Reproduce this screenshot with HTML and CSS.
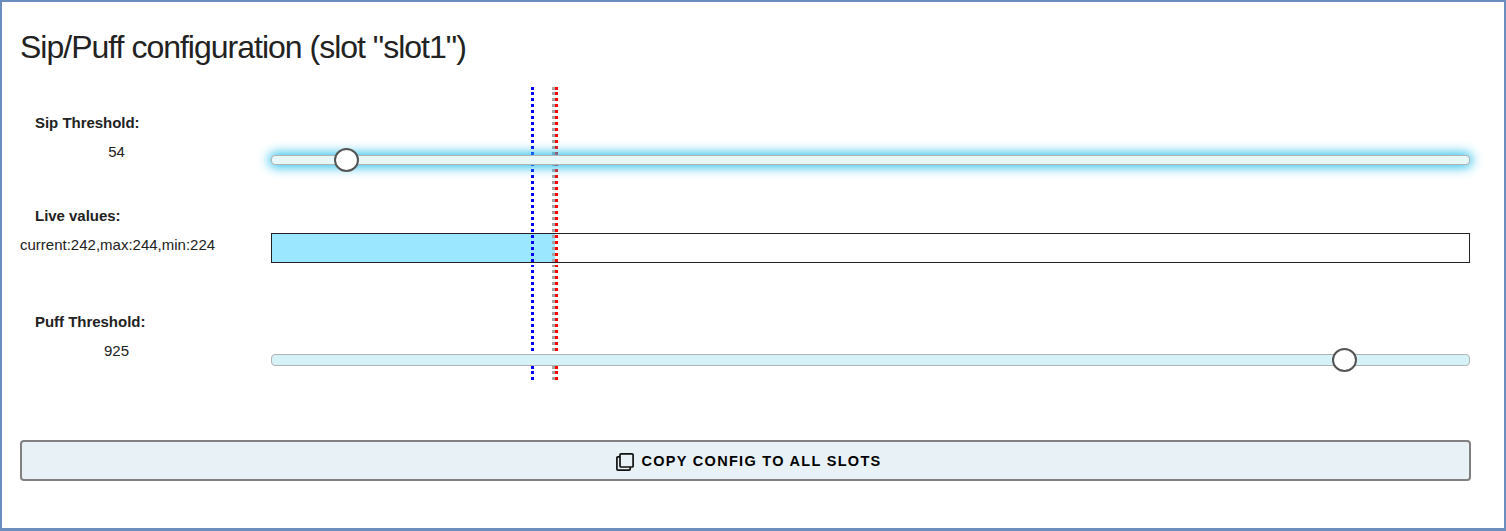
FILE: index.html
```html
<!DOCTYPE html>
<html lang="en">
<head>
<meta charset="utf-8">
<title>Sip/Puff configuration</title>
<link rel="stylesheet" href="styles.css">
</head>
<body>
<main class="panel">
  <h1 class="title">Sip/Puff configuration (slot "slot1")</h1>
  <section class="config">
    <div class="row row-sip">
      <div class="info"><span class="label">Sip Threshold:</span><span class="value">54</span></div>
      <div class="slider focused"><span class="thumb" style="left:62px"></span></div>
    </div>
    <div class="row row-live">
      <div class="info"><span class="label">Live values:</span><span class="value live-value">current:242,max:244,min:224</span></div>
      <div class="bar"><div class="fill" style="width:283px"></div></div>
    </div>
    <div class="row row-puff">
      <div class="info"><span class="label">Puff Threshold:</span><span class="value">925</span></div>
      <div class="slider"><span class="thumb" style="left:1060px"></span></div>
    </div>
    <i class="marker min" style="left:511px"></i>
    <i class="marker current" style="left:532px"></i>
    <i class="marker max" style="left:535px"></i>
  </section>
  <button class="copy" type="button">
    <svg class="icon" viewBox="0 0 18 18" width="18" height="18" fill="none" stroke="#111" stroke-width="1.7"><rect x="4" y=".9" width="13.1" height="13.1" rx="1"/><path d="M4 3.8H1.9Q.9 3.8.9 4.8V16.1Q.9 17.1 1.9 17.1H13.2Q14.2 17.1 14.2 16.1V14"/></svg>
    <span class="copy-text">Copy config to all slots</span>
  </button>
</main>
</body>
</html>
```
FILE: styles.css
```css
* { box-sizing: border-box; }
body { margin: 0; font-family: "Liberation Sans", Arial, sans-serif; color: #222; background: #fff; }
.panel { height: 531px; padding: 28px 34px 0 18px; border: 2px solid #6c8ebf; border-bottom-width: 3px; }
.title { margin: 0; height: 57px; font-size: 32px; font-weight: 400; line-height: 35px; letter-spacing: -1px; white-space: nowrap; }
.config { position: relative; height: 293px; width: 1450px; }
.row { display: grid; grid-template-columns: 193px 1199px; column-gap: 58px; }
.row-sip { height: 93px; padding-top: 26px; }
.row-live { height: 106px; padding-top: 26px; }
.row-puff { height: 94px; padding-top: 26px; }
.info { display: flex; flex-direction: column; font-size: 15px; line-height: 20px; gap: 9px; }
.label { padding-left: 15px; font-size: 15px; font-weight: 700; letter-spacing: -.03px; white-space: nowrap; }
.value { text-align: center; font-size: 15px; white-space: nowrap; }
.live-value { align-self: flex-start; }
.slider { position: relative; z-index: 2; height: 12px; margin-top: 42px; border: 1px solid #b2b2b2; border-radius: 4px; background: #d5f2f8; }
.focused { height: 10px; background: #e8f7fc; box-shadow: 0 0 12px 2px #23bdec; }
.thumb { position: absolute; top: -7px; width: 25px; height: 24px; border: 2px solid #555; border-radius: 50%; background: #fff; }
.focused .thumb { top: -8px; }
.bar { height: 30px; margin-top: 27px; border: 1px solid #222; background: #fff; }
.fill { height: 100%; background: #9be7ff; }
.marker {
  --dots: repeating-linear-gradient(currentColor 0 3px, transparent 3px 6px);
  --solid: linear-gradient(currentColor, currentColor);
  position: absolute; z-index: 1; top: 0; width: 3px; height: 293px;
  background-image: var(--solid), var(--dots), var(--dots), var(--solid), var(--dots), var(--dots);
  background-position: 0 0, 0 5px, 0 76px, 0 178px, 0 183px, 0 284px;
  background-size: 3px 3px, 3px 70px, 3px 100px, 3px 2px, 3px 99px, 3px 9px;
  background-repeat: no-repeat;
}
.min { color: #00f; }
.current { color: #a6a6a6; }
.max { color: #f00; }
.copy { display: flex; align-items: center; justify-content: center; gap: 7px; width: 1451px; height: 41px; margin: 60px 0 0; padding: 0 0 0 7px; border: 2px solid #808080; border-radius: 4px; background: #e8f1f5; color: #000; font: 700 14.5px "Liberation Sans", Arial, sans-serif; letter-spacing: 1.3px; text-transform: uppercase; }
.icon { position: relative; top: 1px; }
```
